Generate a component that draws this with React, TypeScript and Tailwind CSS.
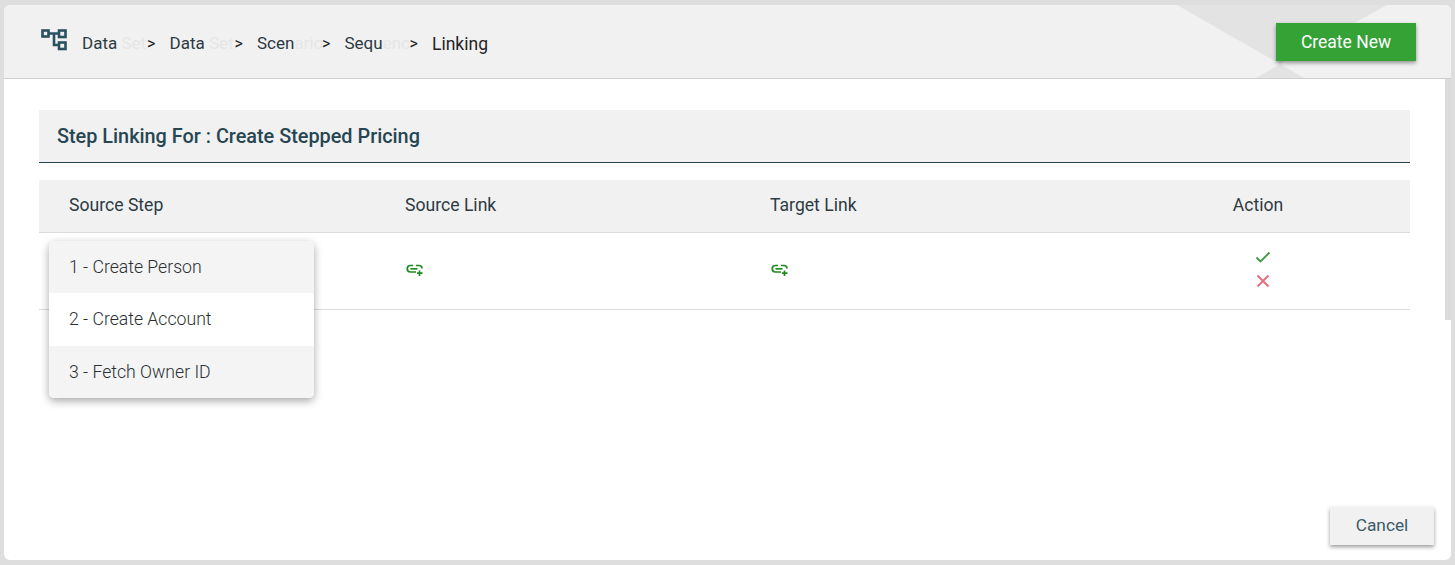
import React from 'react';

const crumbs = [
  { dark: 'Data', faint: ' Set' },
  { dark: 'Data', faint: ' Set' },
  { dark: 'Scen', faint: 'ario' },
  { dark: 'Sequ', faint: 'ence' },
];

const steps = [
  { label: '1 - Create Person', cls: 'bg-[#f4f4f4] h-[52px]' },
  { label: '2 - Create Account', cls: 'bg-white h-[53px]' },
  { label: '3 - Fetch Owner ID', cls: 'bg-[#f4f4f4] h-[52px]' },
];

const TreeIcon = () => (
  <svg width="28" height="24" viewBox="0 0 28 24" fill="none" stroke="#2b5060" strokeWidth="2.600" className="mb-[3px] shrink-0">
    <rect x="2.500" y="2.500" width="6" height="6" />
    <rect x="19" y="2.500" width="6.500" height="6.500" />
    <rect x="19" y="14.500" width="6.500" height="6.500" />
    <path d="M8 5.500h11M14 5.500v11.500h5" />
  </svg>
);

const LinkPlus = () => (
  <svg width="20" height="14" viewBox="0 0 20 14" fill="none" stroke="#1e8a1e" strokeWidth="1.700">
    <path d="M8 2.500H5.500a3 3 0 0 0 0 6.500H11M11 2.500h3a3 3 0 0 1 3 3" />
    <path d="M5.500 5.800h7" />
    <path d="M14.500 7.500v5.500M12 10.200h5.500" />
  </svg>
);

export default function App() {
  return (
    <div className="h-[565px] w-[1455px] overflow-hidden bg-[#dedede] pt-[5px] pl-1 font-['Roboto',sans-serif]">
      <div className="relative flex h-[555px] w-[1447px] flex-col overflow-hidden rounded-md bg-white">
        {/* Header */}
        <div className="relative flex h-[74px] shrink-0 items-center justify-between overflow-hidden border-b border-[#cfcfcf] bg-[#f1f1f1] pl-[36px] pr-[35px]">
          <svg className="absolute left-[1173px] top-0" width="274" height="74" viewBox="0 0 274 74">
            <polygon points="0,0 210,0 103,59" fill="#e3e3e3" />
            <polygon points="103,59 79,73 127,73" fill="#e3e3e3" />
          </svg>
          <div className="relative flex items-center">
            <TreeIcon />
            <div className="ml-[14px] flex pt-[5px] text-[17px] text-[#2c3a42]">
              {crumbs.map((c, i) => (
                <div key={i} className="flex w-[87.500px]">
                  <span className="w-[65px] overflow-hidden whitespace-pre">
                    {c.dark}
                    <span className="text-[#e6e6e6]">{c.faint}</span>
                  </span>
                  <span className="text-[16px] leading-[26px] text-[#222]">&gt;</span>
                </div>
              ))}
              <span className="text-[17.500px] text-[#1f2428] [font-weight:450]">Linking</span>
            </div>
          </div>
          <button className="relative h-[38px] w-[140px] bg-[#34a235] pt-[2px] text-[17.500px] text-white shadow-[0_2px_4px_rgba(0,0,0,0.4)] [font-weight:450]">
            Create New
          </button>
        </div>

        {/* Scrollbar */}
        <div className="absolute right-0 top-[74px] h-[241px] w-[6px] bg-[#dcdcdc]" />

        {/* Body */}
        <div className="flex flex-1 flex-col pl-[35px] pr-[41px] pt-[31px]">
          <div className="flex h-[53px] items-center border-b border-[#264653] bg-[#f1f1f1] pl-[18px] pt-[2px] text-[19.850px] font-medium text-[#264653]">
            Step Linking For : Create Stepped Pricing
          </div>

          <div className="mt-[17px] grid h-[53px] grid-cols-[366px_365px_336px_1fr] items-center border-b border-[#dcdcdc] bg-[#f1f1f1] pb-[1px] text-[17.600px] text-[#2d3b43] [font-weight:450]">
            <div className="pl-[30px]">Source Step</div>
            <div>Source Link</div>
            <div>Target Link</div>
            <div className="text-center">Action</div>
          </div>

          <div className="relative grid h-[77px] grid-cols-[366px_365px_336px_1fr] items-center border-b border-[#dcdcdc]">
            <div />
            <div className="pb-[2px]"><LinkPlus /></div>
            <div className="pb-[2px]"><LinkPlus /></div>
            <div className="flex flex-col items-center pb-[4px] pl-[10px]">
              <svg width="18" height="18" viewBox="0 0 18 18" fill="none" stroke="#3f9a3f" strokeWidth="1.800">
                <path d="M2.500 9.500l4 4 9-9" />
              </svg>
              <svg width="18" height="18" viewBox="0 0 18 18" fill="none" stroke="#ec6a7c" strokeWidth="1.800" className="mt-[6px]">
                <path d="M3.500 3.500l11 11M14.500 3.500l-11 11" />
              </svg>
            </div>

            {/* Dropdown */}
            <div className="absolute left-[10px] top-[8px] w-[265px] overflow-hidden rounded-[5px] bg-white shadow-[0_3px_8px_rgba(0,0,0,0.35)]">
              {steps.map((s) => (
                <div key={s.label} className={`flex items-center pl-[20px] text-[17.650px] font-light text-[#2a2f33] ${s.cls}`}>
                  {s.label}
                </div>
              ))}
            </div>
          </div>

          {/* Footer */}
          <div className="mt-auto mb-[15px] flex justify-end">
            <button className="relative left-[24px] h-[38px] w-[104px] bg-[#f1f1f1] text-[17.300px] text-[#3b5b68] shadow-[0_2px_4px_rgba(0,0,0,0.4)]">
              Cancel
            </button>
          </div>
        </div>
      </div>
    </div>
  );
}
